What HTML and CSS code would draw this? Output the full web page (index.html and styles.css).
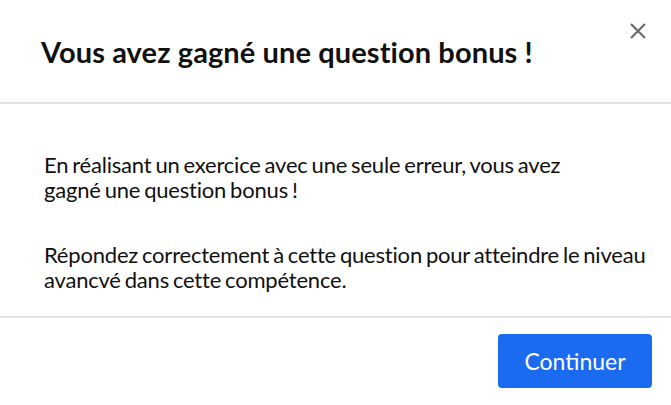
FILE: index.html
```html
<!DOCTYPE html>
<html lang="fr">
<head>
    <meta charset="UTF-8">
    <meta name="viewport" content="width=device-width, initial-scale=1.0">
    <title>Question bonus</title>
    <link rel="stylesheet" href="styles.css">
</head>
<body>
    <div class="modal">
        <div class="modal-header">
            <h1>Vous avez gagné une question bonus !</h1>
            <button class="close" aria-label="Fermer">
                <svg width="18" height="18" viewBox="0 0 18 18">
                    <path d="M2 2 L16 16 M16 2 L2 16" stroke="#6b6b6b" stroke-width="2.2" fill="none"/>
                </svg>
            </button>
        </div>
        <div class="modal-body">
            <p>En réalisant un exercice avec une seule erreur, vous avez<br>gagné une question bonus !</p>
            <p>Répondez correctement à cette question pour atteindre le niveau avancvé dans cette compétence.</p>
        </div>
        <div class="modal-footer">
            <button class="btn">Continuer</button>
        </div>
    </div>
</body>
</html>
```

FILE: styles.css
```css
body {
    margin: 0;
    font-family: Lato, "Liberation Sans", sans-serif;
    background-color: white;
    color: #111;
}
.modal {
    background-color: white;
}
.modal-header {
    display: flex;
    justify-content: space-between;
    align-items: flex-start;
    padding: 0 19px 0 41px;
    height: 102px;
    border-bottom: 2px solid #e3e3e3;
}
.modal-header h1 {
    margin: 35px 0 0;
    font-size: 29px;
    font-weight: bold;
    line-height: 34px;
    letter-spacing: 0.1px;
}
.close {
    background: none;
    border: none;
    padding: 0;
    margin-top: 22px;
    margin-right: 5px;
    cursor: pointer;
}
.modal-body {
    padding: 48px 20px 24px 44px;
    border-bottom: 2px solid #e3e3e3;
}
.modal-body p {
    margin: 0 0 40px;
    font-size: 22px;
    line-height: 25px;
    letter-spacing: -0.2px;
    word-spacing: -1.5px;
}
.modal-body p:last-child {
    margin-bottom: 0;
}
.modal-footer {
    display: flex;
    justify-content: flex-end;
    padding: 16px 19px;
}
.btn {
    font-family: Lato, "Liberation Sans", sans-serif;
    font-size: 23px;
    width: 154px;
    height: 54px;
    color: white;
    background-color: #1b6bf0;
    border: none;
    border-radius: 4px;
    cursor: pointer;
}
```
